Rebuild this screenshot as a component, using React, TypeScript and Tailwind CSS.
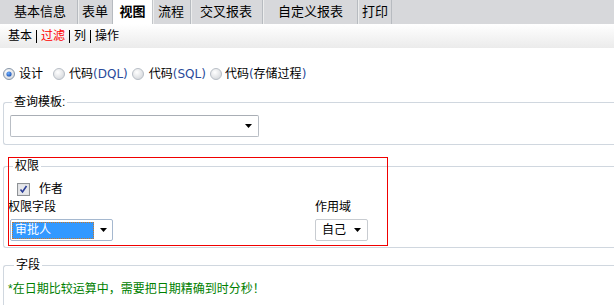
import React from 'react';

const Arrow = () => (
  <svg width="7" height="4" viewBox="0 0 7 4" className="block">
    <polygon points="0,0 7,0 3.5,4" fill="#000" />
  </svg>
);

const Radio: React.FC<{ checked?: boolean }> = ({ checked }) => (
  <svg width="12" height="12" viewBox="0 0 12 12" className="block shrink-0">
    <defs>
      <radialGradient id={checked ? 'rOn' : 'rOff'} cx="40%" cy="35%" r="70%">
        <stop offset="0%" stopColor="#ffffff" />
        <stop offset="100%" stopColor="#d4d7db" />
      </radialGradient>
      <radialGradient id="dot" cx="40%" cy="35%" r="70%">
        <stop offset="0%" stopColor="#6fb0ff" />
        <stop offset="100%" stopColor="#1a4fb0" />
      </radialGradient>
    </defs>
    <circle cx="6" cy="6" r="5.5" fill={`url(#${checked ? 'rOn' : 'rOff'})`} stroke={checked ? '#8796a8' : '#b8bec6'} />
    {checked && <circle cx="6" cy="6" r="2.6" fill="url(#dot)" />}
  </svg>
);

const Checkbox = () => (
  <svg width="13" height="13" viewBox="0 0 13 13" className="block shrink-0">
    <rect x="0.5" y="0.5" width="12" height="12" fill="#dcdde0" stroke="#8e9296" />
    <rect x="1.5" y="1.5" width="10" height="10" fill="#e6e7ea" />
    <path d="M3.5 6.5 L5.5 9 L9.5 3" fill="none" stroke="#2b3d96" strokeWidth="1.6" />
  </svg>
);

const Sep = () => <span className="inline-block w-px h-[13px] bg-black mx-[4px]" />;

const Latin: React.FC<{ children: React.ReactNode }> = ({ children }) => (
  <span className="text-[#2a4a9a] font-['DejaVu_Sans',sans-serif]">{children}</span>
);

export default function App() {
  return (
    <div className="relative w-[614px] h-[305px] overflow-hidden bg-white text-black text-[12px] leading-[16px] font-['Liberation_Sans','Noto_Sans_CJK_SC',sans-serif]">
      {/* tabs */}
      <div className="flex h-[24px] bg-[#d7d8db] text-[13px]">
        <div className="flex items-center w-[78px] pl-[14px] border-r border-[#b7bbc0]">基本信息</div>
        <div className="flex items-center w-[35px] pl-[4px] border-r border-[#b7bbc0] shadow-[inset_1px_0_0_#eceded]">表单</div>
        <div className="flex items-center justify-center w-[40px] bg-white font-bold border-r border-[#c3c6ca]">视图</div>
        <div className="flex items-center w-[38px] pl-[5px] border-r border-[#b7bbc0] shadow-[inset_1px_0_0_#eceded]">流程</div>
        <div className="flex items-center w-[72px] pl-[9px] border-r border-[#b7bbc0] shadow-[inset_1px_0_0_#eceded]">交叉报表</div>
        <div className="flex items-center w-[95px] pl-[15px] border-r border-[#b7bbc0] shadow-[inset_1px_0_0_#eceded]">自定义报表</div>
        <div className="flex items-center w-[34px] pl-[4px] border-r border-[#b7bbc0] shadow-[inset_1px_0_0_#eceded]">打印</div>
      </div>

      {/* sub menu */}
      <div className="flex items-center h-[24px] pl-[8px] bg-gradient-to-b from-white to-[#ebebeb]">
        <span>基本</span>
        <Sep />
        <span className="text-[#ff0000]">过滤</span>
        <Sep />
        <span>列</span>
        <Sep />
        <span>操作</span>
      </div>

      {/* mode radios */}
      <div className="flex items-center h-[20px] mt-[16px] pl-[3px]">
        <Radio checked />
        <span className="ml-[4px] mr-[10px]">设计</span>
        <Radio />
        <span className="ml-[4px] mr-[4px]">代码<Latin>(DQL)</Latin></span>
        <Radio />
        <span className="ml-[5px] mr-[4px]">代码<Latin>(SQL)</Latin></span>
        <Radio />
        <span className="ml-[3px]">
          代码<Latin>(</Latin>存储过程<Latin>)</Latin>
        </span>
      </div>

      {/* query template */}
      <fieldset className="mt-[10px] ml-[3px] border border-r-0 border-[#d0d7df] rounded-l-[3px] pl-[6px] pb-[7px]">
        <legend className="ml-[2px] px-[2px]">查询模板:</legend>
        <div className="flex items-center justify-end h-[22px] w-[249px] mt-[5px] border border-[#b9bec5] border-t-[#a9aeb5] rounded-[2px] bg-white pr-[6px]">
          <Arrow />
        </div>
      </fieldset>

      {/* permission */}
      <fieldset className="mt-[13px] ml-[3px] border border-r-0 border-[#d0d7df] rounded-l-[3px] pl-[4px] pb-[6px]">
        <legend className="ml-[5px] px-[2px]">权限</legend>
        <div className="flex items-center h-[16px] mt-[7px] ml-[9px]">
          <Checkbox />
          <span className="ml-[9px]">作者</span>
        </div>
        <div className="flex mt-[2px]">
          <div className="w-[307px]">
            <div className="h-[16px]">权限字段</div>
            <div className="flex items-center h-[22px] w-[103px] ml-[2px] mt-[4px] pl-[1px] pr-[5px] border border-[#a5b8cf] rounded-[2px] bg-white">
              <div className="flex items-center h-[17px] w-[82px] bg-[#3399ff] border border-dotted border-[#c87a2a] pl-[2px] text-white">
                审批人
              </div>
              <div className="ml-auto"><Arrow /></div>
            </div>
          </div>
          <div>
            <div className="h-[16px]">作用域</div>
            <div className="flex items-center h-[22px] w-[53px] mt-[4px] pl-[6px] pr-[6px] border border-[#c8ccd1] rounded-[2px] bg-white">
              <span>自己</span>
              <div className="ml-auto"><Arrow /></div>
            </div>
          </div>
        </div>
      </fieldset>

      {/* fields */}
      <fieldset className="mt-[9px] ml-[3px] border border-r-0 border-[#d0d7df] rounded-l-[3px] pl-[4px] pb-[20px]">
        <legend className="ml-[6px] px-[2px]">字段</legend>
        <div className="mt-[8px] text-[#008000]">*在日期比较运算中，需要把日期精确到时分秒！</div>
      </fieldset>

      {/* highlight box */}
      <div className="absolute left-[8px] top-[157px] w-[380px] h-[89px] border border-[#f00000] pointer-events-none" />
    </div>
  );
}
